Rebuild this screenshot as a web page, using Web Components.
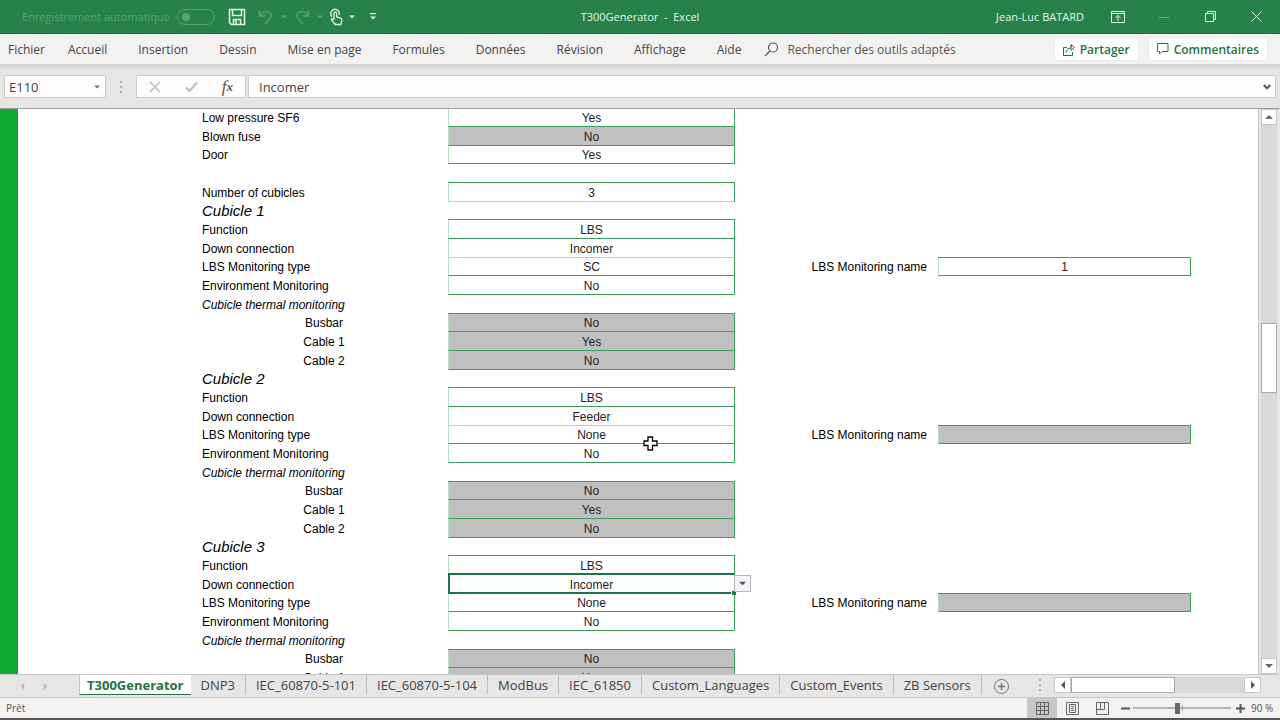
<!DOCTYPE html>
<html lang="fr">
<head>
<meta charset="utf-8">
<title>T300Generator - Excel</title>
<style>
html, body { margin: 0; height: 100%; }
body { font-family: "Open Sans", "Noto Sans", sans-serif; font-size: 12px; color: #444; }
</style>
</head>
<body>
<excel-window>
  <title-bar slot="top"></title-bar>
  <ribbon-tabs slot="top"></ribbon-tabs>
  <formula-bar slot="top"></formula-bar>
  <work-sheet></work-sheet>
  <sheet-tabs slot="bottom"></sheet-tabs>
  <status-bar slot="bottom"></status-bar>
</excel-window>

<script>
const RESET = `
  :host { box-sizing: border-box; }
  *, *::before, *::after { box-sizing: border-box; }
  button, input { font: inherit; color: inherit; margin: 0; padding: 0; border: 0; background: none; border-radius: 0; outline: none; }
  button { display: flex; align-items: center; justify-content: center; white-space: nowrap; }
  svg { display: block; flex: none; }
`;

function define(name, css, html) {
  customElements.define(name, class extends HTMLElement {
    constructor() {
      super();
      this.attachShadow({ mode: 'open' }).innerHTML = `<style>${RESET}${css}</style>${html}`;
    }
  });
}

const arrow = (dir, size = 8) => {
  const d = { up: 'M0 6 4 2 8 6z', down: 'M0 2 8 2 4 6z', left: 'M6 0 6 8 2 4z', right: 'M2 0 6 4 2 8z' }[dir];
  return `<svg width="${size}" height="${size}" viewBox="0 0 8 8" fill="currentColor"><path d="${d}"/></svg>`;
};

define('excel-window', `
  :host { display: flex; flex-direction: column; height: 100vh; overflow: hidden; border-bottom: 2px solid #555; background: #e6e6e6; }
  main { flex: 1; min-height: 0; display: flex; }
  header, footer { flex: none; }
`, `<header><slot name="top"></slot></header><main><slot></slot></main><footer><slot name="bottom"></slot></footer>`);

define('title-bar', `
  :host { display: grid; grid-template-columns: 1fr auto 1fr; align-items: center; height: 34px; background: #27814a; color: #e4f5e9; font-size: 11px; border-bottom: 1px solid #217044; }
  .quick { display: flex; align-items: center; padding-left: 22px; }
  label { display: flex; align-items: center; gap: 7px; color: #54a471; white-space: nowrap; }
  input { appearance: none; width: 38px; height: 16px; border: 1px solid #54a471; border-radius: 8px; display: flex; align-items: center; padding-left: 4px; }
  input::before { content: ""; width: 8px; height: 8px; border-radius: 4px; background: #54a471; }
  .save { margin-left: 13px; }
  .dim { color: #54a471; }
  .undo { margin-left: 11px; }
  .drop { width: 18px; }
  .more { margin-left: 8px; }
  h1 { margin: 0; font: inherit; white-space: pre; }
  .right { display: flex; align-items: center; justify-content: flex-end; padding-right: 16px; }
  .user { margin-right: 26px; white-space: nowrap; }
  .win { width: 16px; height: 24px; margin-left: 30px; }
  .win.first { margin-left: 0; }
`, `
  <div class="quick">
    <label>Enregistrement automatique<input type="checkbox"></label>
    <button class="save" aria-label="Enregistrer"><svg width="18" height="18" viewBox="0 0 18 18" fill="none" stroke="currentColor" stroke-width="1.5"><path d="M1.5 1.5h15v15h-13l-2-2zM4.5 1.5v6h9v-6M5.500 16.500v-5h7v5M8 12v4"/></svg></button>
    <button class="dim undo" aria-label="Annuler"><svg width="18" height="18" viewBox="0 0 18 18" fill="none" stroke="currentColor" stroke-width="1.400"><path d="M2.500 2v6h6M2.500 8c3-5 8-5.500 10.500-3 2.500 3 0 6-5 11"/></svg></button>
    <button class="dim drop" aria-label="Options">${arrow('down', 6)}</button>
    <button class="dim" aria-label="Rétablir"><svg width="18" height="18" viewBox="0 0 18 18" fill="none" stroke="currentColor" stroke-width="1.400"><path d="M15.500 2v6h-6M15.500 8c-3-5-8-5.500-10.500-3-2.500 3 0 6 5 11"/></svg></button>
    <button class="dim drop" aria-label="Options">${arrow('down', 6)}</button>
    <button aria-label="Mode tactile"><svg width="14" height="18" viewBox="0 0 14 18" fill="none" stroke="currentColor" stroke-width="1.300"><path d="M5 12V5.500a1.300 1.300 0 0 1 2.600 0V9l4 1c1.200.400 1.300 1 1.200 2l-.800 4.500H6.500L2.500 12c-.400-1.500 1-2 2.500-.500M3 8.500A4.200 4.200 0 1 1 10 7"/></svg></button>
    <button class="drop" aria-label="Options">${arrow('down', 6)}</button>
    <button class="more" aria-label="Personnaliser"><svg width="8" height="8" viewBox="0 0 8 8" fill="currentColor"><path d="M1 0h6v1.300H1zM1 3.500h6L4 6.500z"/></svg></button>
  </div>
  <h1>T300Generator  -  Excel</h1>
  <div class="right">
    <span class="user">Jean-Luc BATARD</span>
    <button class="win first" aria-label="Ruban"><svg width="14" height="12" viewBox="0 0 14 12" fill="none" stroke="currentColor"><path d="M.500.500h13v11H.500zM.500 2.500h13M7 10V4.500M4.500 7 7 4.500 9.500 7"/></svg></button>
    <button class="win" aria-label="Réduire"><svg width="10" height="10" viewBox="0 0 10 10" stroke="#6cb486"><path d="M0 5.500h10"/></svg></button>
    <button class="win" aria-label="Restaurer"><svg width="11" height="11" viewBox="0 0 11 11" fill="none" stroke="currentColor"><path d="M.500 2.500h8v8h-8zM2.500 2.500v-2h8v8h-2"/></svg></button>
    <button class="win" aria-label="Fermer"><svg width="11" height="11" viewBox="0 0 11 11" stroke="currentColor"><path d="M.500.500l10 10M10.500.500l-10 10"/></svg></button>
  </div>`);

define('ribbon-tabs', `
  :host { display: flex; align-items: center; justify-content: space-between; height: 30px; padding: 0 12px 0 8px; background: #f3f2f1; font-size: 12px; }
  nav { display: flex; align-items: center; gap: 31px; }
  nav > :nth-child(2) { margin-left: -8px; }
  .search { display: flex; align-items: center; gap: 8px; margin-left: -8px; color: #555; }
  .actions { display: flex; gap: 9px; }
  .actions button { height: 24px; padding: 0 8px; gap: 5px; background: #fff; color: #217346; font-weight: 600; border: 1px solid #eceaea; border-radius: 2px; }
`, `
  <nav>${['Fichier','Accueil','Insertion','Dessin','Mise en page','Formules','Données','Révision','Affichage','Aide'].map(t => `<button>${t}</button>`).join('')}
    <button class="search"><svg width="15" height="15" viewBox="0 0 15 15" fill="none" stroke="currentColor" stroke-width="1.200"><circle cx="9" cy="5.500" r="4.500"/><path d="M6 9 1 14"/></svg>Rechercher des outils adaptés</button>
  </nav>
  <div class="actions">
    <button><svg width="12" height="13" viewBox="0 0 12 13" fill="none" stroke="currentColor"><path d="M4 4.500H.500v8h9V9M3 9.500c.500-3 2-4.500 5-4.500M8 1.500v6l3.500-3zM8 2v2"/></svg>Partager</button>
    <button><svg width="12" height="12" viewBox="0 0 12 12" fill="none" stroke="currentColor"><path d="M.500.500h10.500v8H5L2.500 11V8.500h-2z"/></svg>Commentaires</button>
  </div>`);

define('formula-bar', `
  :host { display: flex; height: 45px; padding: 11px 4px 10px 4px; background: linear-gradient(#cfcfcf, #e6e6e6 7px); border-bottom: 1px solid #a0a0a0; font-size: 13px; }
  .box { display: flex; align-items: center; background: #fdfdfd; border: 1px solid #cdcdcd; }
  .name { width: 102px; }
  .name input { flex: 1; min-width: 0; padding-left: 4px; }
  .name button { width: 16px; color: #777; }
  .grip { width: 30px; display: flex; align-items: center; justify-content: center; color: #aaa; }
  .tools { width: 110px; justify-content: space-around; color: #bdbdbd; }
  .fx { color: #555; font: italic 17px/20px "Liberation Serif", serif; }
  .fx span { font-size: 13px; font-weight: bold; }
  .value { flex: 1; margin-left: 2px; }
  .value input { flex: 1; padding-left: 10px; }
  .value button { width: 16px; color: #555; }
`, `
  <div class="box name"><input aria-label="Zone Nom" value="E110"><button aria-label="Noms">${arrow('down', 6)}</button></div>
  <div class="grip"><svg width="3" height="12" viewBox="0 0 3 12" fill="currentColor"><path d="M0 0h2v2H0zM0 5h2v2H0zM0 10h2v2H0z"/></svg></div>
  <div class="box tools">
    <button aria-label="Annuler"><svg width="12" height="12" viewBox="0 0 12 12" stroke="currentColor" stroke-width="1.500"><path d="M1 1l10 10M11 1 1 11"/></svg></button>
    <button aria-label="Entrer"><svg width="13" height="12" viewBox="0 0 13 12" fill="none" stroke="currentColor" stroke-width="2.200"><path d="M1 6.500 4.500 10 12 1.500"/></svg></button>
    <button class="fx">f<span>x</span></button>
  </div>
  <div class="box value"><input aria-label="Barre de formule" value="Incomer"><button aria-label="Développer"><svg width="8" height="6" viewBox="0 0 8 6" fill="none" stroke="currentColor" stroke-width="2.200"><path d="M.700 1 4 4.300 7.300 1"/></svg></button></div>`);

const rows = [
  { label: 'Low pressure SF6', value: 'Yes' },
  { label: 'Blown fuse', value: 'No', grey: true },
  { label: 'Door', value: 'Yes' },
  { cap: true },
  { label: 'Number of cubicles', value: '3' },
];
[['Incomer', 'SC', '1'], ['Feeder', 'None', ''], ['Incomer', 'None', '']].forEach(([down, type, name], i) => {
  rows.push(
    { label: `Cubicle ${i + 1}`, kind: 'head', cap: true },
    { label: 'Function', value: 'LBS' },
    { label: 'Down connection', value: down, active: i === 2, nameCap: true },
    { label: 'LBS Monitoring type', value: type, name, named: true, pointer: i === 1 },
    { label: 'Environment Monitoring', value: 'No' },
    { label: 'Cubicle thermal monitoring', kind: 'sub', cap: true },
    { label: 'Busbar', kind: 'mid', value: 'No', grey: true },
    { label: 'Cable 1', kind: 'mid', value: 'Yes', grey: true });
  if (i < 2) rows.push({ label: 'Cable 2', kind: 'mid', value: 'No', grey: true });
});

const rowHtml = r => `<tr>
  <td></td>
  <td class="label ${r.kind || ''}">${r.label || ''}</td>
  <td class="${r.value ? 'v' : ''} ${r.cap ? 'cap' : ''} ${r.grey ? 'grey' : ''} ${r.active ? 'active' : ''}">${r.value || ''}${
    r.active ? `<i class="frame"></i><button class="list" aria-label="Liste">${arrow('down', 7)}</button>` : ''}${
    r.pointer ? `<svg class="pointer" width="15" height="15" viewBox="0 0 15 15" fill="#fff" stroke="#000" stroke-width="1.300"><path d="M5 1h4.500v4H14v4.500H9.500V14H5V9.500H1V5h4z"/></svg>` : ''}</td>
  <td class="mon">${r.named ? 'LBS Monitoring name' : ''}</td>
  <td class="${r.named ? 'v' : ''} ${r.nameCap ? 'cap' : ''} ${r.named && !r.name ? 'grey' : ''}">${r.name || ''}</td>
  <td></td></tr>`;

define('work-sheet', `
  :host { display: flex; flex: 1; min-width: 0; }
  .view { flex: 1; min-width: 0; overflow: hidden; background: #fff; border-left: 18px solid #0faa34; border-right: 1px solid #c6c6c6; }
  table { table-layout: fixed; width: 100%; border-spacing: 0; font: 12px/16px "Liberation Sans", Arial, sans-serif; color: #000; }
  tr { height: 19px; }
  tr:nth-child(3n), tr:first-child { height: 18px; }
  td { padding: 0; white-space: nowrap; text-align: center; line-height: 16px; }
  .label { text-align: left; padding-left: 2px; }
  .label.mid { text-align: center; padding-left: 0; }
  .head { font-size: 15px; font-style: italic; }
  .sub { font-style: italic; }
  .mon { text-align: right; padding-right: 11px; }
  .v { padding-top: 1px; border: solid #3a9e5c; border-width: 0 1px 1px 1px; border-left-color: #b5e3c2; color: #222; position: relative; }
  .cap { border-bottom: 1px solid #3a9e5c; }
  tr:nth-child(3n+2) .v:not(.grey) { border-bottom-color: #a5dcb5; }
  .grey { background: #c0c0c0; }
  .frame { position: absolute; inset: -2px -1px -1px -1px; border: solid #217346; border-width: 2px 1px 2px 2px; }
  .frame::after { content: ""; position: absolute; right: -2px; bottom: -3px; width: 4px; height: 4px; background: #217346; box-shadow: -1px -1px 0 #fff; }
  .list { position: absolute; left: 100%; top: 0; width: 17px; height: 17px; background: #f3f5f8; border: 1px solid #b4b8c0; color: #555; z-index: 1; }
  .pointer { position: absolute; left: 194px; top: 10px; z-index: 1; }
  .scroll { flex: none; width: 21px; padding: 0 3px 0 2px; display: flex; flex-direction: column; }
  .scroll button { height: 16px; background: #fff; border: 1px solid #c6c6c6; color: #666; }
  .track { flex: 1; display: grid; grid-template-rows: 198fr 71fr 265fr; background: #d9d9d9; }
  .thumb { grid-row: 2; background: #fff; border: 1px solid #ababab; }
`, `
  <div class="view"><table>
    <colgroup><col style="width:182px"><col style="width:248px"><col style="width:287px"><col style="width:203px"><col style="width:253px"><col></colgroup>
    <tbody>${rows.map(rowHtml).join('')}</tbody></table></div>
  <div class="scroll"><button aria-label="Haut">${arrow('up')}</button><div class="track"><div class="thumb"></div></div><button aria-label="Bas">${arrow('down')}</button></div>`);

define('sheet-tabs', `
  :host { display: flex; height: 24px; background: #e6e6e6; border-top: 1px solid #c6c6c6; border-bottom: 1px solid #c6c6c6; font-size: 13px; padding-right: 19px; }
  .nav { width: 79px; display: flex; justify-content: center; gap: 16px; padding-right: 12px; color: #bbb; }
  .tabs { display: flex; align-items: stretch; height: 20px; }
  .tabs button { padding: 0 10px; position: relative; }
  .tabs button:not(.on) { border-right: 1px solid #bdbdbd; height: 19px; }
  .tabs .on { padding: 0 7px; background: #fff; color: #217346; font-weight: bold; border-bottom: 1px solid #217346; border-left: 1px solid #c6c6c6; }
  .add { margin-left: 12px; color: #777; }
  .hscroll { margin-left: auto; display: flex; align-items: flex-start; padding-top: 2px; }
  .grip { color: #aaa; margin: 2px 12px 0 0; }
  .hscroll button { width: 17px; height: 16px; background: #fff; border: 1px solid #c6c6c6; color: #555; }
  .track { width: 173px; height: 16px; background: #d9d9d9; }
  .thumb { width: 60%; height: 100%; background: #fff; border: 1px solid #ababab; }
`, `
  <div class="nav"><button aria-label="Précédent">${arrow('left', 7)}</button><button aria-label="Suivant">${arrow('right', 7)}</button></div>
  <div class="tabs"><button class="on">T300Generator</button>${['DNP3','IEC_60870-5-101','IEC_60870-5-104','ModBus','IEC_61850','Custom_Languages','Custom_Events','ZB Sensors'].map(t => `<button>${t}</button>`).join('')}</div>
  <button class="add" aria-label="Nouvelle feuille"><svg width="15" height="15" viewBox="0 0 15 15" fill="none" stroke="currentColor"><circle cx="7.500" cy="7.500" r="7"/><path d="M7.500 4v7M4 7.500h7" stroke-width="1.500"/></svg></button>
  <div class="hscroll"><svg class="grip" width="3" height="12" viewBox="0 0 3 12" fill="currentColor"><path d="M0 0h2v2H0zM0 5h2v2H0zM0 10h2v2H0z"/></svg>
    <button aria-label="Gauche">${arrow('left')}</button><div class="track"><div class="thumb"></div></div><button aria-label="Droite">${arrow('right')}</button></div>`);

define('status-bar', `
  :host { display: flex; align-items: center; height: 20px; background: #f3f2f1; font-size: 10px; color: #555; padding: 0 4px 0 6px; }
  .right { margin-left: auto; display: flex; align-items: center; height: 100%; }
  .view { width: 30px; height: 100%; color: #666; }
  .view.on { background: #c6c6c6; }
  .sign { width: 10px; height: 10px; color: #555; }
  .minus { margin-left: 3px; }
  input { appearance: none; width: 98px; height: 12px; margin: 0 4px 0 3px; background: linear-gradient(#aaa, #aaa) 50% 50% / 1px 6px no-repeat, linear-gradient(#b5b5b5, #b5b5b5) 0 50% / 100% 2px no-repeat; }
  input::-webkit-slider-thumb { appearance: none; width: 5px; height: 11px; background: #6a6a6a; }
  output { margin-left: 6px; width: 25px; white-space: nowrap; }
`, `
  <span>Prêt</span>
  <div class="right">
    <button class="view on" aria-label="Normal"><svg width="13" height="13" viewBox="0 0 13 13" fill="none" stroke="currentColor"><path d="M.500.500h12v12H.500zM4.500.500v12M8.500.500v12M.500 4.500h12M.500 8.500h12"/></svg></button>
    <button class="view" aria-label="Mise en page"><svg width="13" height="13" viewBox="0 0 13 13" fill="none" stroke="currentColor"><path d="M.500.500h12v12H.500zM3.500 2.500h6v8h-6zM5 4.500h3M5 6.500h3M5 8.500h3"/></svg></button>
    <button class="view" aria-label="Avec sauts de page"><svg width="13" height="13" viewBox="0 0 13 13" fill="none" stroke="currentColor"><path d="M.500.500h12v12H.500zM4.500.500v7M.500 7.500h8v-7"/></svg></button>
    <button class="sign minus" aria-label="Zoom arrière"><svg width="9" height="9" viewBox="0 0 9 9" stroke="currentColor" stroke-width="2"><path d="M0 4.500h9"/></svg></button>
    <input type="range" aria-label="Zoom" min="0" max="100" value="45">
    <button class="sign" aria-label="Zoom avant"><svg width="9" height="9" viewBox="0 0 9 9" stroke="currentColor" stroke-width="2"><path d="M0 4.500h9M4.500 0v9"/></svg></button>
    <output>90 %</output>
  </div>`);
</script>
</body>
</html>
